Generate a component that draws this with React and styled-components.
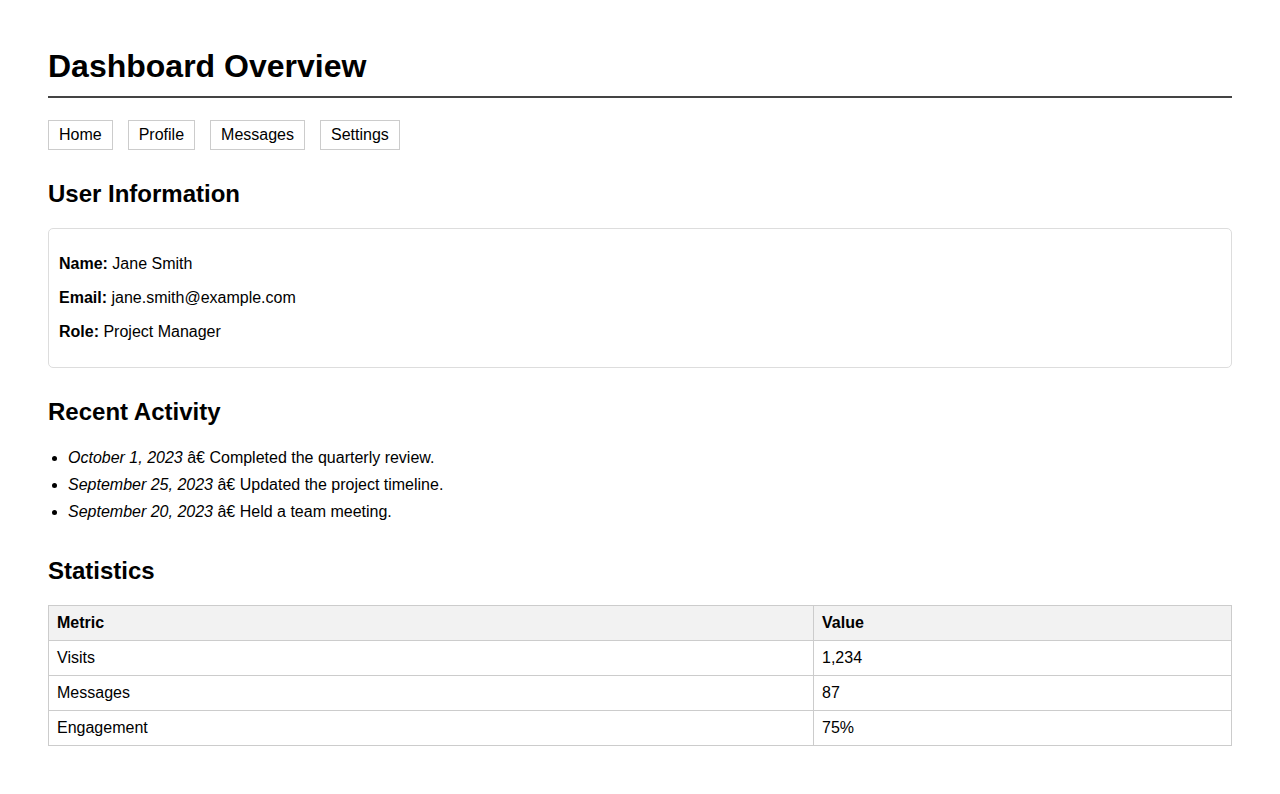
import React from 'react';
import styled, { createGlobalStyle } from 'styled-components';

const GlobalStyle = createGlobalStyle`
  body {
    margin: 0;
    padding: 48px;
    font-family: "Liberation Sans", Arial, sans-serif;
    font-size: 16px;
    color: #000;
    background: #fff;
  }
`;

const Title = styled.h1`
  font-size: 32px;
  margin: 0 0 22px;
  padding-bottom: 11px;
  border-bottom: 2px solid #444;
  line-height: 37px;
`;

const Nav = styled.nav`
  display: flex;
  gap: 15px;
  margin-bottom: 30px;
`;

const NavLink = styled.a`
  display: inline-block;
  padding: 5px 10px;
  border: 1px solid #ccc;
  color: #000;
  text-decoration: none;
  line-height: 18px;
`;

const Heading = styled.h2`
  font-size: 24px;
  line-height: 28px;
  margin: 20px 0;
`;

const Card = styled.div`
  border: 1px solid #ddd;
  border-radius: 5px;
  padding: 10px;
  margin-bottom: 30px;

  p {
    margin: 16px 0;
    line-height: 18px;
  }
`;

const ActivityList = styled.ul`
  margin: 23px 0 36px;
  padding-left: 20px;

  li {
    line-height: 18px;
    margin-bottom: 9px;
  }
`;

const Table = styled.table`
  width: 100%;
  border-collapse: collapse;

  th,
  td {
    border: 1px solid #ccc;
    padding: 8px;
    text-align: left;
    line-height: 18px;
  }
  th {
    background-color: #f2f2f2;
  }
  th:first-child {
    width: 748px;
  }
`;

const activities = [
  { date: 'October 1, 2023', text: 'Completed the quarterly review.' },
  { date: 'September 25, 2023', text: 'Updated the project timeline.' },
  { date: 'September 20, 2023', text: 'Held a team meeting.' },
];

const stats = [
  ['Visits', '1,234'],
  ['Messages', '87'],
  ['Engagement', '75%'],
];

export default function App() {
  return (
    <>
      <GlobalStyle />
      <Title>Dashboard Overview</Title>
      <Nav>
        <NavLink href="#">Home</NavLink>
        <NavLink href="#">Profile</NavLink>
        <NavLink href="#">Messages</NavLink>
        <NavLink href="#">Settings</NavLink>
      </Nav>

      <Heading>User Information</Heading>
      <Card>
        <p>
          <strong>Name:</strong> Jane Smith
        </p>
        <p>
          <strong>Email:</strong> jane.smith@example.com
        </p>
        <p>
          <strong>Role:</strong> Project Manager
        </p>
      </Card>

      <Heading>Recent Activity</Heading>
      <ActivityList>
        {activities.map((a) => (
          <li key={a.date}>
            <em>{a.date}</em> â€ {a.text}
          </li>
        ))}
      </ActivityList>

      <Heading>Statistics</Heading>
      <Table>
        <thead>
          <tr>
            <th>Metric</th>
            <th>Value</th>
          </tr>
        </thead>
        <tbody>
          {stats.map(([k, v]) => (
            <tr key={k}>
              <td>{k}</td>
              <td>{v}</td>
            </tr>
          ))}
        </tbody>
      </Table>
    </>
  );
}
